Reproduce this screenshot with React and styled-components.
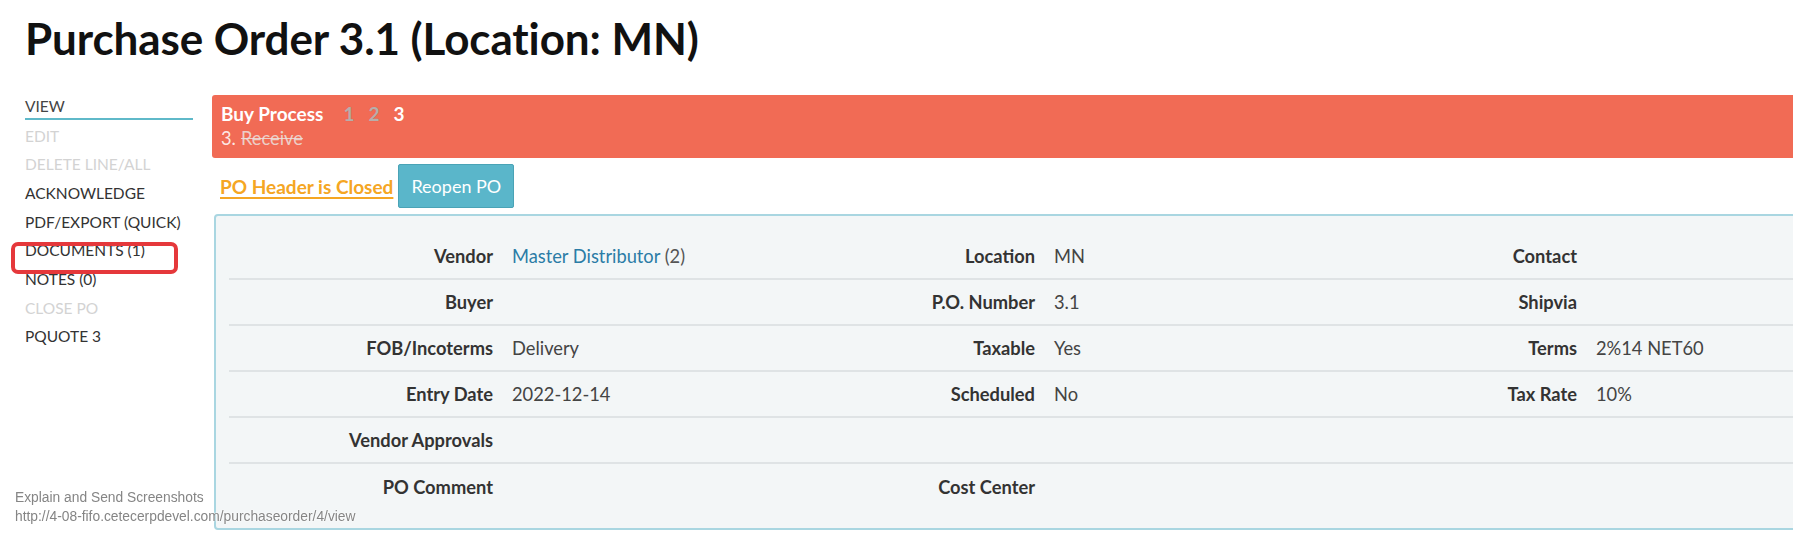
import React from "react";
import styled, { createGlobalStyle } from "styled-components";

const Global = createGlobalStyle`
  html, body { margin: 0; padding: 0; background: #fff; overflow: hidden; }
  body { font-family: Lato, "Open Sans", sans-serif; color: #333; }
`;

const Page = styled.div`
  width: 1900px;
  padding: 0 0 0 25px;
  box-sizing: border-box;
`;

const Title = styled.h1`
  margin: 0;
  padding-top: 12px;
  height: 81px;
  box-sizing: border-box;
  font-family: Lato, sans-serif;
  font-weight: 700;
  font-size: 44px;
  line-height: 52px;
  color: #111;
  letter-spacing: -0.1px;
`;

const Body = styled.div`
  display: flex;
  align-items: flex-start;
  gap: 19px;
`;

const Sidebar = styled.nav`
  width: 168px;
  flex: none;
  display: flex;
  flex-direction: column;
  padding-top: 13px;
`;

const NavItem = styled.a`
  display: block;
  font-size: 15.5px;
  line-height: 28.7px;
  height: 28.7px;
  text-transform: uppercase;
  color: ${(p) => (p.$disabled ? "#d3d3d3" : "#333")};
  text-decoration: none;
  ${(p) =>
    p.$active &&
    `
    border-bottom: 2px solid #5fb9c9;
    height: 24px;
    line-height: 24px;
    margin-bottom: 1.5px;
    color: #444;
  `}
`;

const Main = styled.div`
  flex: 1;
  padding-top: 14px;
  display: flex;
  flex-direction: column;
`;

const ProcessBar = styled.div`
  background: #f16b55;
  border-radius: 3px;
  height: 63px;
  box-sizing: border-box;
  padding: 6px 9px;
  color: #fff;
  font-size: 18.3px;
`;

const ProcessLine = styled.div`
  line-height: 25px;
  display: flex;
  align-items: baseline;
`;

const ProcessName = styled.span`
  font-weight: 700;
  font-size: 19px;
  margin-right: 6px;
`;

const Step = styled.span`
  font-weight: 700;
  font-size: 19px;
  margin-left: 14px;
  color: ${(p) => (p.$current ? "#fff" : "#b8aeab")};
  text-shadow: ${(p) => (p.$current ? "none" : "0 0 1px rgba(0,0,0,0.15)")};
`;

const StepNo = styled.span`
  color: rgba(255, 255, 255, 0.85);
  margin-right: 5px;
`;

const StepDone = styled.span`
  color: rgba(235, 225, 222, 0.85);
  text-decoration: line-through;
`;

const StatusRow = styled.div`
  display: flex;
  align-items: center;
  gap: 5px;
  margin-top: 6px;
  padding-left: 8px;
`;

const ClosedLink = styled.a`
  color: #f5a623;
  font-weight: 700;
  font-size: 19px;
  text-decoration: underline;
  text-underline-offset: 3px;
  text-decoration-thickness: 2px;
`;

const Button = styled.button`
  font-family: Lato, sans-serif;
  font-size: 18px;
  color: #fff;
  background: #5ab6ca;
  border: 1px solid #4aa3b6;
  border-radius: 2px;
  height: 44px;
  padding: 0 12px;
  cursor: pointer;
`;

const Panel = styled.div`
  margin-top: 6px;
  margin-left: 2px;
  background: #f3f6f7;
  border: 2px solid #a9d6e1;
  border-radius: 4px;
  padding: 18px 13px 18px 13px;
`;

const Row = styled.div`
  display: grid;
  grid-template-columns: repeat(3, 273px 269px);
  height: 46px;
  align-items: center;
  border-bottom: ${(p) => (p.$last ? "none" : "2px solid #dfe3e5")};
  box-sizing: border-box;
`;

const Label = styled.div`
  text-align: right;
  padding-right: 9px;
  font-weight: 700;
  font-size: 18.3px;
  color: #333;
`;

const Value = styled.div`
  padding-left: 10px;
  font-size: 18.3px;
  color: #444;
`;

const VendorLink = styled.a`
  color: #2b7ca6;
  text-decoration: none;
`;

const Muted = styled.span`
  color: #555;
`;

const Annotation = styled.div`
  position: absolute;
  left: 11px;
  top: 242px;
  width: 167px;
  height: 32px;
  box-sizing: border-box;
  border: 4px solid #e5383b;
  border-radius: 7px;
  pointer-events: none;
`;

const StatusOverlay = styled.div`
  position: fixed;
  left: 15px;
  bottom: 12px;
  font-family: "Liberation Sans", Arial, sans-serif;
  font-size: 13.8px;
  line-height: 19px;
  color: #858585;
  text-shadow: 0 0 2px #fff, 0 0 2px #fff;
`;

const navItems = [
  { label: "View", active: true },
  { label: "Edit", disabled: true },
  { label: "Delete Line/All", disabled: true },
  { label: "Acknowledge" },
  { label: "PDF/Export (Quick)" },
  { label: "Documents (1)" },
  { label: "Notes (0)" },
  { label: "Close PO", disabled: true },
  { label: "PQuote 3" },
];

const rows = [
  [
    ["Vendor", <><VendorLink href="#">Master Distributor</VendorLink> <Muted>(2)</Muted></>],
    ["Location", "MN"],
    ["Contact", ""],
  ],
  [
    ["Buyer", ""],
    ["P.O. Number", "3.1"],
    ["Shipvia", ""],
  ],
  [
    ["FOB/Incoterms", "Delivery"],
    ["Taxable", "Yes"],
    ["Terms", "2%14 NET60"],
  ],
  [
    ["Entry Date", "2022-12-14"],
    ["Scheduled", "No"],
    ["Tax Rate", "10%"],
  ],
  [
    ["Vendor Approvals", ""],
    ["", ""],
    ["", ""],
  ],
  [
    ["PO Comment", ""],
    ["Cost Center", ""],
    ["", ""],
  ],
];

export default function App() {
  return (
    <>
      <Global />
      <Page>
        <Title>Purchase Order 3.1 (Location: MN)</Title>
        <Body>
          <Sidebar>
            {navItems.map((n) => (
              <NavItem key={n.label} href="#" $active={n.active} $disabled={n.disabled}>
                {n.label}
              </NavItem>
            ))}
          </Sidebar>
          <Main>
            <ProcessBar>
              <ProcessLine>
                <ProcessName>Buy Process</ProcessName>
                <Step>1</Step>
                <Step>2</Step>
                <Step $current>3</Step>
              </ProcessLine>
              <ProcessLine>
                <StepNo>3.</StepNo>
                <StepDone>Receive</StepDone>
              </ProcessLine>
            </ProcessBar>
            <StatusRow>
              <ClosedLink href="#">PO Header is Closed</ClosedLink>
              <Button>Reopen PO</Button>
            </StatusRow>
            <Panel>
              {rows.map((r, i) => (
                <Row key={i} $last={i === rows.length - 1}>
                  {r.map(([l, v], j) => (
                    <React.Fragment key={j}>
                      <Label>{l}</Label>
                      <Value>{v}</Value>
                    </React.Fragment>
                  ))}
                </Row>
              ))}
            </Panel>
          </Main>
        </Body>
      </Page>
      <Annotation />
      <StatusOverlay>
        <div>Explain and Send Screenshots</div>
        <div>http://4-08-fifo.cetecerpdevel.com/purchaseorder/4/view</div>
      </StatusOverlay>
    </>
  );
}
